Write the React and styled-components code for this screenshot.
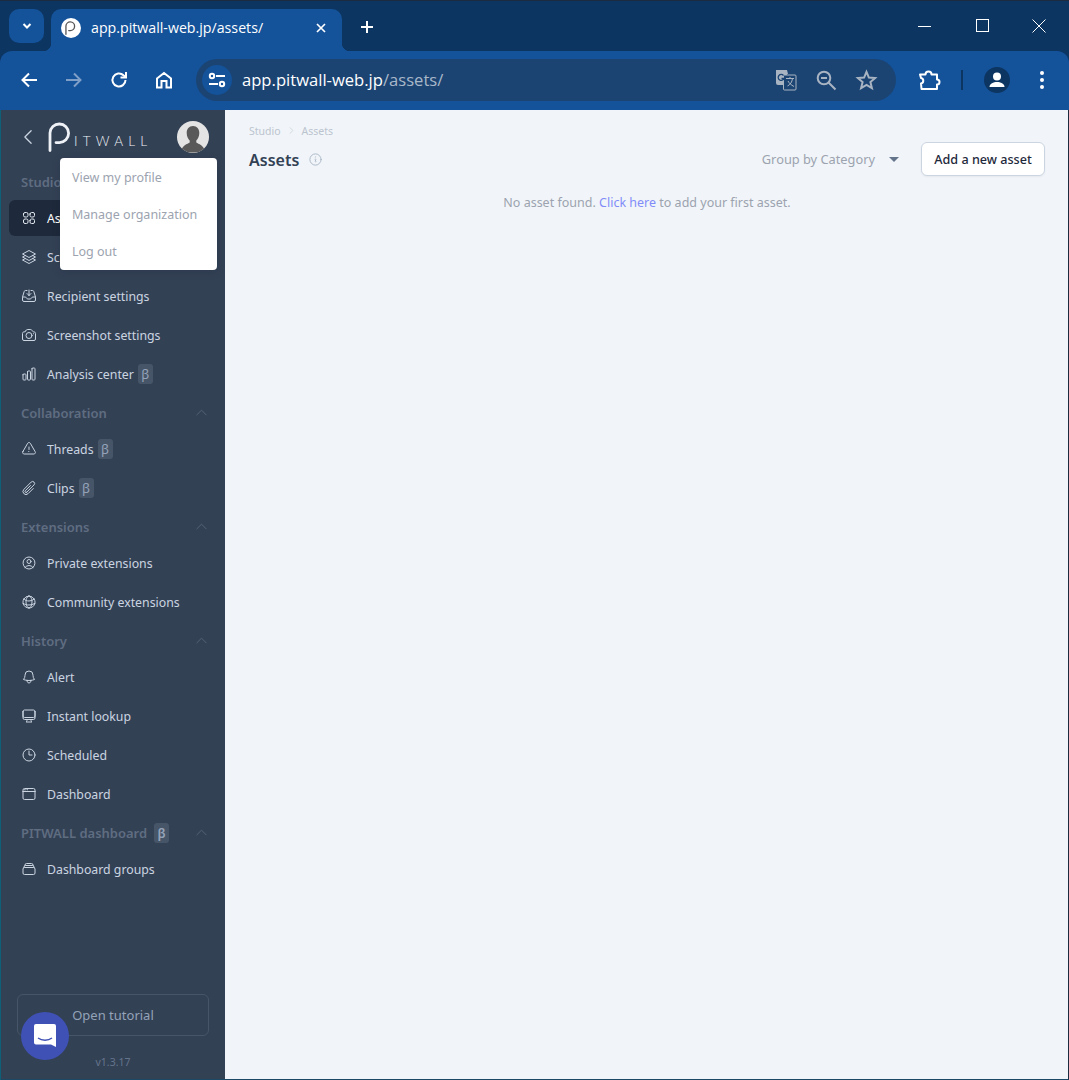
import React from "react";
import styled, { createGlobalStyle } from "styled-components";
import {
  HiOutlineSquares2X2, HiOutlineSquare3Stack3D, HiOutlineInboxArrowDown, HiOutlineCamera,
  HiOutlineChartBar, HiOutlineExclamationTriangle, HiOutlinePaperClip, HiOutlineUserCircle,
  HiOutlineGlobeAlt, HiOutlineBell, HiOutlineComputerDesktop, HiOutlineClock, HiOutlineWindow,
  HiOutlineRectangleStack, HiOutlineChevronUp, HiOutlineChevronLeft, HiOutlineChevronRight,
  HiOutlineInformationCircle,
} from "react-icons/hi2";

const Global = createGlobalStyle`
  html, body { margin: 0; padding: 0; background: #0c3561; }
  * { box-sizing: border-box; }
  body { font-family: "Noto Sans", Inter, sans-serif; }
`;

const Frame = styled.div`
  width: 1069px; height: 1080px; display: flex; flex-direction: column; overflow: hidden;
  background: #0c3561; border-top: 1px solid #1c2b40; position: relative;
`;
const TabStrip = styled.div`
  height: 50px; flex: none; display: flex; align-items: flex-start; padding: 8px 0 0 9px;
  background: #0c3561; color: #fff; font-family: "Open Sans", "Noto Sans", sans-serif;
`;
const TabMenu = styled.div`
  width: 35px; height: 34px; border-radius: 10px; background: #14529a; display: flex;
  align-items: center; justify-content: center; margin-right: 7px; flex: none;
`;
const Tab = styled.div`
  position: relative; width: 291px; height: 42px; background: #14529a; border-radius: 10px 10px 0 0;
  display: flex; align-items: flex-start; padding: 9px 0 0 10px; font-size: 14.2px; flex: none;
  &::before, &::after { content: ""; position: absolute; bottom: 0; width: 8px; height: 8px; }
  &::before { left: -8px; background: radial-gradient(circle at 0 0, transparent 8px, #14529a 8.5px); }
  &::after { right: -8px; background: radial-gradient(circle at 100% 0, transparent 8px, #14529a 8.5px); }
`;
const Favicon = styled.div`
  width: 20px; height: 20px; border-radius: 50%; background: #fff; display: flex; color: #555;
  align-items: center; justify-content: center; margin-right: 10px; flex: none;
`;
const TabTitle = styled.span` flex: 1; line-height: 20px; white-space: nowrap; `;
const TabClose = styled.div` width: 20px; height: 20px; margin: 0 11px 0 0; display: flex; align-items: center; justify-content: center; `;
const NewTab = styled.div` width: 20px; height: 20px; margin: 8px 0 0 15px; display: flex; align-items: center; justify-content: center; `;
const WindowControls = styled.div`
  margin-left: auto; display: flex; height: 34px; padding-right: 2px; align-items: center;
`;
const WinButton = styled.div` width: 57px; display: flex; justify-content: center; `;
const MaximizeIcon = styled.svg` margin-left: 2px; `;

const Toolbar = styled.div`
  height: 59px; flex: none; background: #14529a; border-radius: 12px 12px 0 0; display: flex;
  align-items: center; padding: 0 0 1px 17px; color: #fff; font-family: "Open Sans", "Noto Sans", sans-serif;
`;
const ToolIcon = styled.div`
  width: 24px; height: 24px; display: flex; align-items: center; justify-content: center; flex: none;
  margin-right: ${(p) => p.$gap ?? 21}px;
`;
const AddressBar = styled.div`
  width: 700px; height: 42px; border-radius: 21px; background: #1b4473; display: flex; align-items: center;
  padding: 0 18px 0 6px; margin-left: -1px; margin-right: 21px; flex: none;
`;
const Tune = styled.div`
  width: 30px; height: 30px; border-radius: 50%; background: #14529a; display: flex; align-items: center;
  justify-content: center; margin-right: 10px; flex: none;
`;
const Url = styled.div` flex: 1; font-size: 16.6px; line-height: 20px; margin-top: -1px; white-space: nowrap; color: #fff; `;
const UrlPath = styled.span` color: #a9b8c9; `;
const BarIcons = styled.div` display: flex; gap: 17px; align-items: center; `;
const TranslateIcon = styled.svg` margin-right: 1px; `;
const Separator = styled.div` width: 2px; height: 20px; background: #0c3561; margin: 0 21px 0 20px; flex: none; `;
const Avatar = styled.div`
  width: 26px; height: 26px; border-radius: 50%; background: #0c3561; display: flex; align-items: center;
  justify-content: center; margin-right: 20px; flex: none; overflow: hidden;
`;
const MoreIcon = styled.svg` margin-left: 9px; flex: none; `;

const Body = styled.div` flex: 1; min-height: 0; display: flex; border-left: 1px solid #0e6079; border-right: 1px solid #1c2b40; border-bottom: 1px solid #1c4a66; `;
const Sidebar = styled.aside`
  position: relative; width: 224px; flex: none; background: #334155; display: flex; flex-direction: column;
  color: #cbd5e1; font-size: 12.3px;
`;
const SideHeader = styled.div`
  height: 52px; padding: 2px 16px 0 17px; flex: none; display: flex; align-items: center; color: #cbd5e1;
`;
const Logo = styled.div` display: flex; align-items: flex-end; margin-left: 10px; color: #eef2f6; `;
const LogoText = styled.span`
  font-family: Lato, sans-serif; font-weight: 300; font-size: 13.5px; letter-spacing: 5.2px; line-height: 13px; margin: 0 0 4px 2px;
`;
const UserPhoto = styled.div`
  margin-left: auto; width: 32px; height: 32px; border-radius: 50%; background: #e4e4e4; overflow: hidden; flex: none;
`;
const Nav = styled.nav` flex: 1; display: flex; flex-direction: column; `;
const SectionLabel = styled.div`
  height: 36px; padding: 3px 16px 0 20px; display: flex; align-items: center; gap: 3px; font-weight: 600;
  color: #5f6d81; font-size: 13px; flex: none;
`;
const Collapse = styled.span` margin-left: auto; display: flex; color: #566478; `;
const NavRow = styled.div` height: 39px; flex: none; padding: 1.5px 8px; `;
const NavLink = styled.div`
  height: 36px; border-radius: 6px; display: flex; align-items: center; padding: 1px 0 0 12px;
  background: ${(p) => (p.$active ? "#1e293b" : "transparent")};
  color: ${(p) => (p.$active ? "#fff" : "#cbd5e1")};
  white-space: nowrap;
  svg { flex: none; margin-right: 10px; color: ${(p) => (p.$active ? "#e2e8f0" : "#cbd5e1")}; }
`;
const Beta = styled.span`
  display: inline-flex; align-items: center; justify-content: center; width: 15px; height: 20px; border-radius: 3px;
  background: #475569; color: #94a3b8; font-size: 13px; margin-left: 4px;
`;
const SideFooter = styled.div`
  flex: none; padding: 0 16px 8px; display: flex; flex-direction: column; align-items: center; gap: 17px;
`;
const Tutorial = styled.div`
  width: 192px; height: 42px; border: 1px solid #475569; border-radius: 6px; display: flex; align-items: center;
  justify-content: center; color: #94a3b8; font-size: 13px;
`;
const Version = styled.div` color: #64748b; font-size: 10.5px; line-height: 18px; `;
const ChatBubble = styled.div`
  position: absolute; left: 20px; top: 902px; width: 48px; height: 48px; border-radius: 50%; background: #3f51b5;
  display: flex; align-items: center; justify-content: center;
`;
const Menu = styled.div`
  position: absolute; left: 59px; top: 48px; width: 157px; height: 112px; background: #fff; border-radius: 4px;
  display: flex; flex-direction: column; padding: 0 12px; box-shadow: 0 2px 8px rgba(15, 23, 42, .15); color: #9ca3af; font-size: 12.5px;
`;
const MenuItem = styled.div` height: 37px; padding-top: 2px; display: flex; align-items: center; white-space: nowrap; `;

const Main = styled.main` flex: 1; min-width: 0; background: #f1f5f9; padding: 13px 23px 0 24px; font-size: 12.5px; `;
const Breadcrumb = styled.div` display: flex; align-items: center; gap: 6px; color: #bcc4cf; font-size: 10.5px; height: 15px; `;
const HeadRow = styled.div` display: flex; align-items: center; height: 34px; margin-top: 4px; `;
const Title = styled.h1` margin: 0; padding-top: 1px; font-size: 16px; font-weight: 600; color: #334155; line-height: 34px; `;
const InfoIcon = styled.span` display: flex; color: #a8b4c4; margin-left: 9px; `;
const GroupSelect = styled.div` margin-left: auto; display: flex; align-items: center; color: #9ca3af; font-size: 12.8px; `;
const Caret = styled.span`
  width: 0; height: 0; border-left: 5px solid transparent; border-right: 5px solid transparent; border-top: 5px solid #64748b;
  margin: 0 22px 0 14px;
`;
const AddButton = styled.button`
  width: 124px; height: 34px; border-radius: 6px; border: 1px solid #cbd5e1; background: #fff; color: #1e293b;
  font: 500 12.6px "Noto Sans", sans-serif; padding: 0; box-shadow: 0 1px 2px rgba(15, 23, 42, .05);
`;
const Empty = styled.p` margin: 17px 0 0; text-align: center; color: #9ca3af; line-height: 20px; `;
const EmptyLink = styled.span` color: #818cf8; `;

const PLogo = ({ size = 30 }) => (
  <svg width={size * 0.8} height={size} viewBox="0 0 24 30" fill="none" stroke="currentColor" strokeWidth="2.800" strokeLinecap="round">
    <path d="M2 28.500V11a9.300 9.300 0 1 1 9.400 9.600H8" />
  </svg>
);

const items = {
  top: [
    [HiOutlineSquares2X2, "Assets", true],
    [HiOutlineSquare3Stack3D, "Schedule settings"],
    [HiOutlineInboxArrowDown, "Recipient settings"],
    [HiOutlineCamera, "Screenshot settings"],
    [HiOutlineChartBar, "Analysis center", false, true],
  ],
  collab: [
    [HiOutlineExclamationTriangle, "Threads", false, true],
    [HiOutlinePaperClip, "Clips", false, true],
  ],
  ext: [
    [HiOutlineUserCircle, "Private extensions"],
    [HiOutlineGlobeAlt, "Community extensions"],
  ],
  hist: [
    [HiOutlineBell, "Alert"],
    [HiOutlineComputerDesktop, "Instant lookup"],
    [HiOutlineClock, "Scheduled"],
    [HiOutlineWindow, "Dashboard"],
  ],
  dash: [[HiOutlineRectangleStack, "Dashboard groups"]],
};

const Group = ({ label, beta, list, collapsible = true }) => (
  <>
    <SectionLabel>
      {label}
      {beta && <Beta>β</Beta>}
      {collapsible && <Collapse><HiOutlineChevronUp size={15} /></Collapse>}
    </SectionLabel>
    {list.map(([Icon, text, active, isBeta]) => (
      <NavRow key={text}>
        <NavLink $active={active}>
          <Icon size={16} />
          {text}
          {isBeta && <Beta>β</Beta>}
        </NavLink>
      </NavRow>
    ))}
  </>
);

export default function App() {
  return (
    <Frame>
      <Global />
      <TabStrip>
        <TabMenu>
          <svg width="12" height="12" viewBox="0 0 12 12" fill="none" stroke="#fff" strokeWidth="2"><path d="M2.500 4 6 7.500 9.500 4" /></svg>
        </TabMenu>
        <Tab>
          <Favicon><PLogo size={14} /></Favicon>
          <TabTitle>app.pitwall-web.jp/assets/</TabTitle>
          <TabClose>
            <svg width="12" height="12" viewBox="0 0 12 12" stroke="#fff" strokeWidth="1.700"><path d="M2 2l8 8M10 2l-8 8" /></svg>
          </TabClose>
        </Tab>
        <NewTab>
          <svg width="14" height="14" viewBox="0 0 14 14" stroke="#fff" strokeWidth="2"><path d="M7 1v12M1 7h12" /></svg>
        </NewTab>
        <WindowControls>
          <WinButton><svg width="14" height="14" viewBox="0 0 14 14" stroke="#fff"><path d="M0 7.500h13" /></svg></WinButton>
          <WinButton><MaximizeIcon width="14" height="14" viewBox="0 0 14 14" fill="none" stroke="#fff"><rect x=".5" y=".5" width="12" height="12" /></MaximizeIcon></WinButton>
          <WinButton><svg width="14" height="14" viewBox="0 0 14 14" stroke="#fff"><path d="M.5.5l13 13M13.500.5l-13 13" /></svg></WinButton>
        </WindowControls>
      </TabStrip>
      <Toolbar>
        <ToolIcon>
          <svg width="18" height="18" viewBox="0 0 18 18" fill="none" stroke="#fff" strokeWidth="2"><path d="M17 9H3M9 2.500 2.500 9 9 15.500" /></svg>
        </ToolIcon>
        <ToolIcon>
          <svg width="18" height="18" viewBox="0 0 18 18" fill="none" stroke="#7f9fc8" strokeWidth="2"><path d="M1 9h14M9 2.500 15.500 9 9 15.500" /></svg>
        </ToolIcon>
        <ToolIcon>
          <svg width="20" height="20" viewBox="0 0 20 20" fill="none" stroke="#fff" strokeWidth="2"><path d="M16.500 10a6.500 6.500 0 1 1-2-4.700L16.500 7" /><path d="M17 2v5.500h-5.500" fill="none" /></svg>
        </ToolIcon>
        <ToolIcon $gap={21}>
          <svg width="20" height="20" viewBox="0 0 20 20" fill="none" stroke="#fff" strokeWidth="2"><path d="M3 8.500 10 3l7 5.500V17.500h-4.500V11h-5v6.500H3z" /></svg>
        </ToolIcon>
        <AddressBar>
          <Tune>
            <svg width="18" height="16" viewBox="0 0 18 16" fill="none" stroke="#fff" strokeWidth="2"><circle cx="4" cy="4" r="2.200" /><path d="M8 4h9M1 12h9" /><circle cx="14" cy="12" r="2.200" /></svg>
          </Tune>
          <Url>app.pitwall-web.jp<UrlPath>/assets/</UrlPath></Url>
          <BarIcons>
            <TranslateIcon width="22" height="22" viewBox="0 0 22 22">
              <path d="M1 1h11l1 4h-1v11H3a2 2 0 0 1-2-2z" fill="#a9b4c2" />
              <rect x="8.500" y="6" width="12.500" height="15" rx="1" fill="#1b4473" stroke="#a9b4c2" />
              <path d="M11 9.500h8M15 8v1.500M12.500 17c3-1.500 4.500-4 5-7.500M13 12c1 2 3 4 6 5.500" stroke="#a9b4c2" fill="none" />
              <path d="M8.500 6.500a3 3 0 1 0 .5 3H6.500" stroke="#1b4473" strokeWidth="1.300" fill="none" />
            </TranslateIcon>
            <svg width="23" height="22" viewBox="0 0 23 22" fill="none" stroke="#a9b4c2" strokeWidth="2"><circle cx="9" cy="9" r="6.300" /><path d="M6 9h6M13.500 13.500l7 7" /></svg>
            <svg width="23" height="22" viewBox="0 0 23 22" fill="none" stroke="#a9b4c2" strokeWidth="2"><path d="m11.500 2.800 2.400 5.800 6.200.5-4.700 4 1.500 6-5.400-3.200-5.400 3.200 1.500-6-4.700-4 6.200-.5z" /></svg>
          </BarIcons>
        </AddressBar>
        <ToolIcon $gap={0}>
          <svg width="24" height="24" viewBox="0 0 24 24" fill="none" stroke="#fff" strokeWidth="2" strokeLinejoin="round"><path d="M3 6.500h5.500a3 3 0 1 1 6 0H20v5a2.500 2.500 0 1 1 0 5V21H4.500l-.5-5.500a2.800 2.800 0 0 0 0-5.500z" /></svg>
        </ToolIcon>
        <Separator />
        <Avatar>
          <svg width="20" height="20" viewBox="0 0 20 20" fill="#fff"><circle cx="10" cy="6.500" r="4" /><path d="M2.500 17c0-3.500 4-5 7.500-5s7.500 1.500 7.500 5z" /></svg>
        </Avatar>
        <MoreIcon width="6" height="20" viewBox="0 0 6 20" fill="#fff"><circle cx="3" cy="3" r="2" /><circle cx="3" cy="10" r="2" /><circle cx="3" cy="17" r="2" /></MoreIcon>
      </Toolbar>
      <Body>
        <Sidebar>
          <SideHeader>
            <HiOutlineChevronLeft size={20} />
            <Logo>
              <PLogo size={30} />
              <LogoText>ITWALL</LogoText>
            </Logo>
            <UserPhoto>
              <svg width="32" height="32" viewBox="0 0 32 32" fill="#595959">
                <path d="M16 5c4 0 6.300 3 6.300 7 0 3.500-1.500 6-3 7.500v2c2 1.500 8 2.500 9 10H3.700c1-7.500 7-8.500 9-10v-2c-1.500-1.500-3-4-3-7.500 0-4 2.300-7 6.300-7z" />
              </svg>
            </UserPhoto>
          </SideHeader>
          <Nav>
            <Group label="Studio" list={items.top} collapsible={false} />
            <Group label="Collaboration" list={items.collab} />
            <Group label="Extensions" list={items.ext} />
            <Group label="History" list={items.hist} />
            <Group label="PITWALL dashboard" beta list={items.dash} />
          </Nav>
          <SideFooter>
            <Tutorial>Open tutorial</Tutorial>
            <Version>v1.3.17</Version>
          </SideFooter>
          <ChatBubble>
            <svg width="24" height="26" viewBox="0 0 24 26">
              <path d="M3 1h18a2 2 0 0 1 2 2v21l-5-2.500H3a2 2 0 0 1-2-2V3a2 2 0 0 1 2-2z" fill="#fff" />
              <path d="M5 15c4 3 10 3 14 0" stroke="#3f51b5" strokeWidth="1.400" fill="none" />
            </svg>
          </ChatBubble>
          <Menu>
            <MenuItem>View my profile</MenuItem>
            <MenuItem>Manage organization</MenuItem>
            <MenuItem>Log out</MenuItem>
          </Menu>
        </Sidebar>
        <Main>
          <Breadcrumb>Studio <HiOutlineChevronRight size={9} /> Assets</Breadcrumb>
          <HeadRow>
            <Title>Assets</Title>
            <InfoIcon><HiOutlineInformationCircle size={15} /></InfoIcon>
            <GroupSelect>Group by Category<Caret /></GroupSelect>
            <AddButton>Add a new asset</AddButton>
          </HeadRow>
          <Empty>No asset found. <EmptyLink>Click here</EmptyLink> to add your first asset.</Empty>
        </Main>
      </Body>
    </Frame>
  );
}
